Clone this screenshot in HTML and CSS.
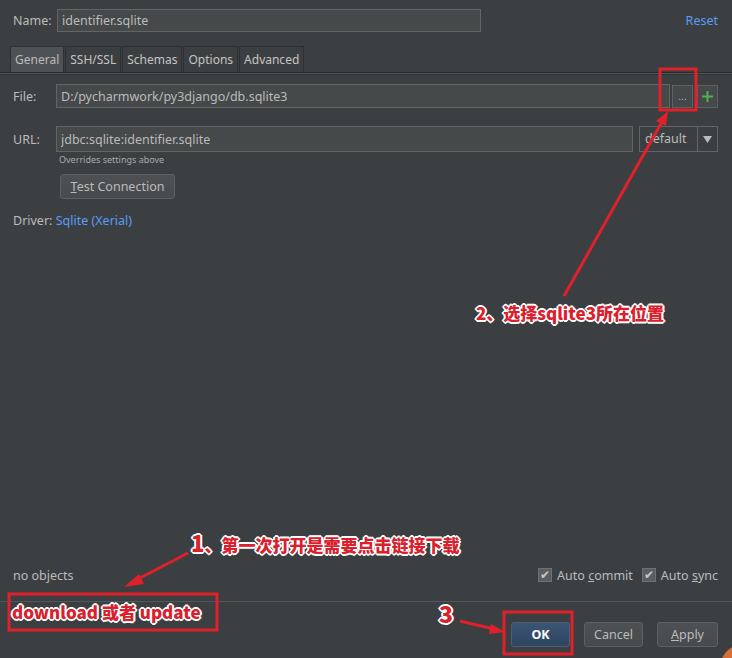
FILE: index.html
```html
<!DOCTYPE html>
<html lang="en">
<head>
  <meta charset="UTF-8">
  <title>Data Source</title>
  <link rel="stylesheet" href="styles.css">
</head>
<body>
  <div class="dialog">
    <div class="name-row">
      <label>Name:</label>
      <input class="field name-field" type="text" value="identifier.sqlite">
      <a class="link reset">Reset</a>
    </div>

    <div class="tabs">
      <div class="tab active">General</div>
      <div class="tab">SSH/SSL</div>
      <div class="tab">Schemas</div>
      <div class="tab">Options</div>
      <div class="tab">Advanced</div>
    </div>

    <div class="panel">
      <div class="row file-row">
        <label>File:</label>
        <input class="field grow" type="text" value="D:/pycharmwork/py3django/db.sqlite3">
        <button class="small-btn dots">...</button>
        <button class="small-btn plus">
          <svg width="13" height="13" viewBox="0 0 13 13"><path d="M6.5 1v11M1 6.5h11" stroke="#4fb04f" stroke-width="2"/></svg>
        </button>
      </div>

      <div class="row url-row">
        <label>URL:</label>
        <input class="field grow" type="text" value="jdbc:sqlite:identifier.sqlite">
        <div class="combo">
          <span class="combo-text">default</span>
          <span class="combo-arrow">
            <svg width="9" height="7" viewBox="0 0 9 7"><path d="M0 0h9L4.5 7z" fill="#bbbbbb"/></svg>
          </span>
        </div>
      </div>
      <div class="hint">Overrides settings above</div>
      <button class="btn test-btn"><u>T</u>est Connection</button>

      <div class="driver">Driver: <a class="link">Sqlite (Xerial)</a></div>
    </div>

    <div class="status-row">
      <span>no objects</span>
      <div class="checks">
        <span class="check"><span class="box">&#10004;</span><span>Auto <u>c</u>ommit</span></span>
        <span class="check"><span class="box">&#10004;</span><span>Auto <u>s</u>ync</span></span>
      </div>
    </div>

    <div class="footer">
      <button class="btn ok">OK</button>
      <button class="btn">Cancel</button>
      <button class="btn"><u>A</u>pply</button>
    </div>

    <!-- screenshot annotations -->
    <div class="notes">
      <svg class="arrows" width="732" height="658" viewBox="0 0 732 658">
        <rect x="660" y="69" width="36" height="41" fill="none" stroke="#e0202a" stroke-width="3"/>
        <rect x="9" y="594" width="208" height="36" fill="none" stroke="#e0202a" stroke-width="3"/>
        <rect x="504" y="612" width="68" height="42" fill="none" stroke="#e0202a" stroke-width="3"/>
        <path d="M564 296L663 120" stroke="#e0202a" stroke-width="3"/>
        <path d="M668 111l-12 10l10 5z" fill="#e0202a"/>
        <path d="M188 553L136 580" stroke="#e0202a" stroke-width="3"/>
        <path d="M124 587l15-13l5 10z" fill="#e0202a"/>
        <path d="M460 621L494 629" stroke="#e0202a" stroke-width="3"/>
        <path d="M505 632l-14-8l-2 10z" fill="#e0202a"/>
        <circle cx="744" cy="668" r="24" fill="#d5703a"/>
      </svg>
      <div class="note note-2">2、选择sqlite3所在位置</div>
      <div class="note note-1"><span class="num">1</span>、第一次打开是需要点击链接下载</div>
      <div class="note note-dl">download 或者 update</div>
      <div class="note note-3">3</div>
    </div>
  </div>
</body>
</html>
```

FILE: styles.css
```css
body {
  margin: 0;
  padding: 0;
  background: #3c3f41;
  font-family: "Noto Sans", "Liberation Sans", "Noto Sans CJK SC", sans-serif;
  font-size: 12.5px;
  color: #bbbbbb;
}

.dialog {
  position: relative;
  width: 732px;
  height: 658px;
  display: flex;
  flex-direction: column;
  overflow: hidden;
}

label {
  color: #bbbbbb;
}

.link {
  color: #589df6;
  cursor: pointer;
}

.field {
  box-sizing: border-box;
  height: 24px;
  background: #45494a;
  border: 1px solid #646464;
  color: #bbbbbb;
  font-family: inherit;
  font-size: 12.5px;
  padding: 0 4px;
  outline: none;
}

.name-row {
  display: flex;
  align-items: center;
  padding: 9px 14px 0 13px;
  height: 23px;
}

.name-row label {
  width: 44px;
}

.name-field {
  width: 424px;
  height: 23px;
}

.reset {
  margin-left: auto;
}

.tabs {
  display: flex;
  margin-top: 14px;
  padding-left: 10px;
  height: 26px;
  border-bottom: 1px solid #2b2b2b;
  box-shadow: 0 1px 0 #515658, 0 2px 0 #2f3133;
}

.tab {
  box-sizing: border-box;
  height: 26px;
  line-height: 26px;
  padding: 0 4px;
  border: 1px solid #2e3032;
  border-bottom: none;
  margin-right: 1px;
  font-size: 12px;
  color: #c4c4c4;
}

.tab.active {
  background: #4e5254;
  color: #bbbbbb;
}

.panel {
  padding: 11px 14px 0 13px;
  flex: 1;
}

.row {
  display: flex;
  align-items: center;
}

.row label {
  width: 43px;
  flex-shrink: 0;
}

.grow {
  flex: 1;
}

.file-row .field {
  height: 24px;
}

.small-btn {
  box-sizing: border-box;
  height: 23px;
  width: 21px;
  margin-left: 4px;
  background: #45494a;
  border: 1px solid #5e6163;
  color: #bbbbbb;
  padding: 0;
  font-size: 10px;
  display: flex;
  align-items: center;
  justify-content: center;
}

.dots {
  margin-left: 2px;
}

.url-row {
  margin-top: 18px;
}

.url-row .field {
  height: 26px;
}

.combo {
  box-sizing: border-box;
  display: flex;
  width: 79px;
  height: 26px;
  margin-left: 6px;
  border: 1px solid #646464;
  background: #3c3f41;
}

.combo-text {
  flex: 1;
  padding-left: 5px;
  line-height: 24px;
}

.combo-arrow {
  width: 19px;
  border-left: 1px solid #646464;
  display: flex;
  align-items: center;
  justify-content: center;
}

.hint {
  margin: 1px 0 0 46px;
  font-size: 9px;
  color: #a9a9a9;
}

.btn {
  box-sizing: border-box;
  height: 25px;
  padding: 0;
  background: linear-gradient(#4d5153, #474b4d);
  border: 1px solid #5e6163;
  border-radius: 3px;
  color: #bbbbbb;
  font-family: inherit;
  font-size: 12.5px;
  white-space: nowrap;
}

.test-btn {
  display: block;
  margin: 8px 0 0 47px;
  width: 115px;
}

.driver {
  margin-top: 13px;
}

.status-row {
  display: flex;
  align-items: center;
  justify-content: space-between;
  padding: 0 14px 0 13px;
  height: 24px;
  margin-bottom: 14px;
}

.checks {
  display: flex;
  gap: 9px;
}

.check {
  display: flex;
  align-items: center;
}

.box {
  box-sizing: border-box;
  width: 14px;
  height: 14px;
  margin-right: 5px;
  background: #5a5e60;
  border: 1px solid #6e7274;
  font-size: 12px;
  line-height: 11px;
  color: #c8c8c8;
  text-align: center;
}

.footer {
  display: flex;
  justify-content: flex-end;
  gap: 14px;
  padding: 20px 14px 11px 0;
  border-top: 1px solid #545658;
}

.footer .btn {
  width: 59px;
}

.footer .btn:last-child {
  width: 61px;
}

.btn.ok {
  background: linear-gradient(#3a5574, #2f4560);
  border-color: #4a5e78;
  color: #ffffff;
  font-weight: bold;
}

/* annotations */
.notes {
  position: absolute;
  left: 0;
  top: 0;
  width: 732px;
  height: 658px;
  pointer-events: none;
}

.arrows {
  position: absolute;
  left: 0;
  top: 0;
}

.note {
  position: absolute;
  font-family: "Noto Sans CJK SC", sans-serif;
  font-weight: 900;
  font-size: 17px;
  line-height: 20px;
  color: #d9202c;
  white-space: nowrap;
  text-shadow: -1px -1px 0 #fff, 1px -1px 0 #fff, -1px 1px 0 #fff, 1px 1px 0 #fff,
    0 2px 0 #fff, 2px 0 0 #fff, 0 -2px 0 #fff, -2px 0 0 #fff;
}

.note-2 {
  left: 476px;
  top: 303px;
}

.note-1 {
  left: 191px;
  top: 532px;
}

.note-1 .num {
  font-size: 22px;
}

.note-dl {
  left: 12px;
  top: 602px;
}

.note-3 {
  left: 439px;
  top: 600px;
  font-size: 23px;
  line-height: 26px;
}
```
